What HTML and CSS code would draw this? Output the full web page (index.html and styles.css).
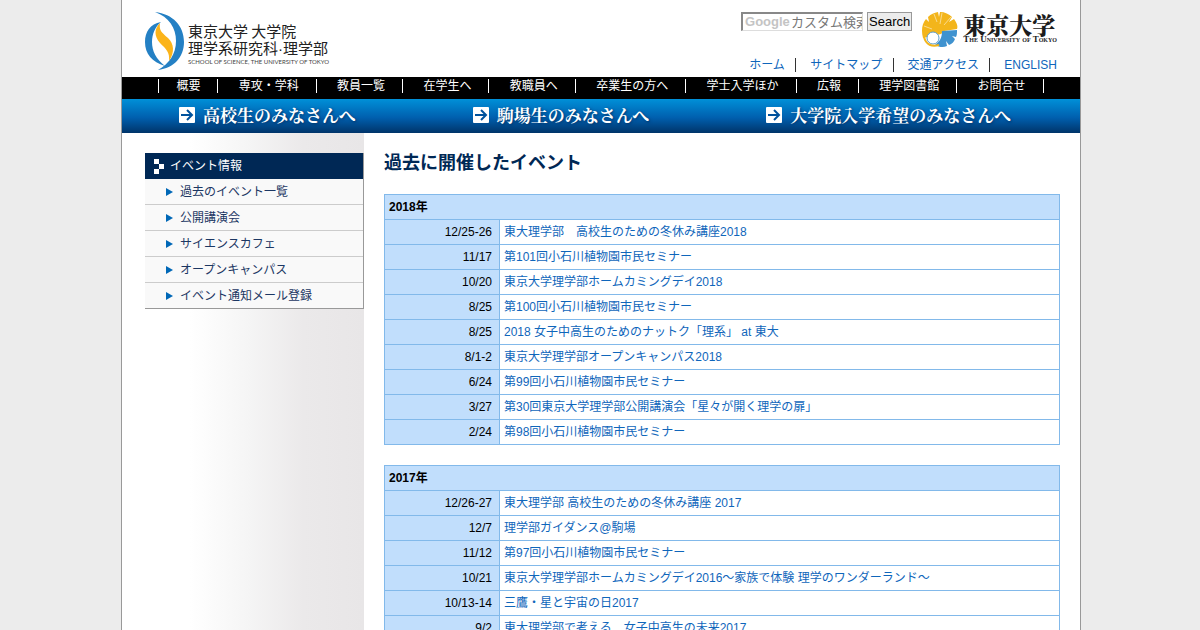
FILE: index.html
```html
<!DOCTYPE html>
<html lang="ja">
<head>
<meta charset="utf-8">
<title>過去に開催したイベント - 東京大学 大学院理学系研究科・理学部</title>
<link rel="stylesheet" href="styles.css">
</head>
<body>
<div class="page">
  <header class="header">
    <a class="brand" href="#">
      <svg class="brand-mark" viewBox="0 0 39 58" aria-hidden="true">
        <path fill="#2480c4" d="M16 10C5 12 0 20 0 30c0 12 7 20 20 24-9-7-13-15-13-24 0-8 3-15 9-20z"/>
        <path fill="#2480c4" d="M10 0c18 2 29 14 29 30 0 15-10 26-26 28 11-6 18-16 18-29C31 16 24 5 10 0z"/>
        <path fill="#fbb41a" d="M15 11c-6 6-6 13 0 20 6 6 10 9 9 18 6-9 5-17-1-23-7-6-9-8-8-15z"/>
      </svg>
      <span class="brand-text">
        <span class="brand-line">東京大学 大学院</span>
        <span class="brand-line">理学系研究科<span class="brand-dot">·</span>理学部</span>
        <span class="brand-en">SCHOOL OF SCIENCE, THE UNIVERSITY OF TOKYO</span>
      </span>
    </a>
    <div class="tools">
      <div class="tools-top">
        <form class="search">
          <label class="search-field">
            <span class="search-logo">Google</span>
            <input class="search-input" type="text" aria-label="カスタム検索" placeholder="カスタム検索">
          </label>
          <button class="search-button" type="button">Search</button>
        </form>
        <a class="univ" href="#">
          <svg class="univ-mark" viewBox="0 0 36 36" aria-hidden="true">
            <path fill="#f3b51b" d="M19 22 1 26C-1 18 0 12 4 7l3 3-1-5c3-3 6-4 10-5l1 5 1-5c5 0 9 2 12 5l-3 5 5-3c3 4 4 7 3 10l-13 2z"/>
            <path fill="#3f92cf" d="m20 19 15-1c0 3 0 5-1 7l-4-1 3 3c-1 3-3 5-6 6l-3-4 1 5c-4 2-8 1-12-1 5-4 7-7 7-14z"/>
            <circle cx="11" cy="26" r="6" fill="#fff" stroke="#5d9dcd"/>
            <path fill="none" stroke="#f3b51b" stroke-width="2" d="M2 25c2 8 8 10 15 8"/>
            <path stroke="#fff" stroke-width=".5" d="m15 10-3-8m6 10 2-11m2 12 7-8M10 17 2 14"/>
          </svg>
          <span class="univ-text">
            <span class="univ-ja">東京大学</span>
            <span class="univ-en">The University of Tokyo</span>
          </span>
        </a>
      </div>
      <ul class="links">
        <li><a href="#">ホーム</a></li>
        <li><a href="#">サイトマップ</a></li>
        <li><a href="#">交通アクセス</a></li>
        <li><a href="#">ENGLISH</a></li>
      </ul>
    </div>
  </header>

  <nav>
    <ul class="nav">
      <li><a href="#">概要</a></li>
      <li><a href="#">専攻・学科</a></li>
      <li><a href="#">教員一覧</a></li>
      <li><a href="#">在学生へ</a></li>
      <li><a href="#">教職員へ</a></li>
      <li><a href="#">卒業生の方へ</a></li>
      <li><a href="#">学士入学ほか</a></li>
      <li><a href="#">広報</a></li>
      <li><a href="#">理学図書館</a></li>
      <li><a href="#">お問合せ</a></li>
    </ul>
  </nav>

  <div class="audience">
    <a href="#"><svg viewBox="0 0 16 16" aria-hidden="true"><rect width="16" height="16" rx="1" fill="#fff"/><path fill="none" stroke="#00529c" stroke-width="2" d="M2 8h11M8 3l5 5-5 5"/></svg>高校生のみなさんへ</a>
    <a href="#"><svg viewBox="0 0 16 16" aria-hidden="true"><rect width="16" height="16" rx="1" fill="#fff"/><path fill="none" stroke="#00529c" stroke-width="2" d="M2 8h11M8 3l5 5-5 5"/></svg>駒場生のみなさんへ</a>
    <a href="#"><svg viewBox="0 0 16 16" aria-hidden="true"><rect width="16" height="16" rx="1" fill="#fff"/><path fill="none" stroke="#00529c" stroke-width="2" d="M2 8h11M8 3l5 5-5 5"/></svg>大学院入学希望のみなさんへ</a>
  </div>

  <div class="body">
    <aside class="side">
      <div class="menu">
        <a class="menu-title" href="#"><svg viewBox="0 0 10 15" aria-hidden="true"><path fill="#fff" d="M0 0h5v5H0zM5 5h5v5H5zM0 10h5v5H0z"/></svg>イベント情報</a>
        <ul class="menu-list">
          <li><a href="#">過去のイベント一覧</a></li>
          <li><a href="#">公開講演会</a></li>
          <li><a href="#">サイエンスカフェ</a></li>
          <li><a href="#">オープンキャンパス</a></li>
          <li><a href="#">イベント通知メール登録</a></li>
        </ul>
      </div>
    </aside>
    <main class="main">
      <h1>過去に開催したイベント</h1>
      <table class="events">
        <thead><tr><th colspan="2">2018年</th></tr></thead>
        <tbody>
          <tr><td class="date">12/25-26</td><td><a href="#">東大理学部　高校生のための冬休み講座2018</a></td></tr>
          <tr><td class="date">11/17</td><td><a href="#">第101回小石川植物園市民セミナー</a></td></tr>
          <tr><td class="date">10/20</td><td><a href="#">東京大学理学部ホームカミングデイ2018</a></td></tr>
          <tr><td class="date">8/25</td><td><a href="#">第100回小石川植物園市民セミナー</a></td></tr>
          <tr><td class="date">8/25</td><td><a href="#">2018 女子中高生のためのナットク「理系」 at 東大</a></td></tr>
          <tr><td class="date">8/1-2</td><td><a href="#">東京大学理学部オープンキャンパス2018</a></td></tr>
          <tr><td class="date">6/24</td><td><a href="#">第99回小石川植物園市民セミナー</a></td></tr>
          <tr><td class="date">3/27</td><td><a href="#">第30回東京大学理学部公開講演会「星々が開く理学の扉」</a></td></tr>
          <tr><td class="date">2/24</td><td><a href="#">第98回小石川植物園市民セミナー</a></td></tr>
        </tbody>
      </table>
      <table class="events">
        <thead><tr><th colspan="2">2017年</th></tr></thead>
        <tbody>
          <tr><td class="date">12/26-27</td><td><a href="#">東大理学部 高校生のための冬休み講座 2017</a></td></tr>
          <tr><td class="date">12/7</td><td><a href="#">理学部ガイダンス@駒場</a></td></tr>
          <tr><td class="date">11/12</td><td><a href="#">第97回小石川植物園市民セミナー</a></td></tr>
          <tr><td class="date">10/21</td><td><a href="#">東京大学理学部ホームカミングデイ2016～家族で体験 理学のワンダーランド～</a></td></tr>
          <tr><td class="date">10/13-14</td><td><a href="#">三鷹・星と宇宙の日2017</a></td></tr>
          <tr><td class="date">9/2</td><td><a href="#">東大理学部で考える　女子中高生の未来2017</a></td></tr>
        </tbody>
      </table>
    </main>
  </div>
</div>
</body>
</html>
```
FILE: styles.css
```css
* { box-sizing: border-box; }
body {
  margin: 0;
  padding-left: 2px;
  background: #ececec;
  color: #000;
  font: 12px/18px "Liberation Sans", "Noto Sans CJK JP", sans-serif;
}
a { color: #0f66bb; text-decoration: none; }
ul { margin: 0; padding: 0; list-style: none; }
svg { display: block; flex: none; }

.page {
  max-width: 960px;
  margin: 0 auto;
  background: #fff;
  border: solid #999;
  border-width: 0 1px;
}

.header {
  display: flex;
  justify-content: space-between;
  padding: 12px 23px 3px;
}
.brand { display: flex; gap: 4px; color: #222; }
.brand-mark { width: 39px; height: 58px; }
.brand-text { display: flex; flex-direction: column; padding-top: 10px; }
.brand-line { font: 15px/17px "Noto Sans CJK JP", sans-serif; white-space: nowrap; }
.brand-dot { font-family: "Liberation Sans", sans-serif; }
.brand-en { font: 6px/9px Lato, sans-serif; color: #444; white-space: nowrap; }

.tools { display: flex; flex-direction: column; align-items: flex-end; gap: 8px; }
.tools-top { display: flex; gap: 10px; }
.search { display: flex; align-items: flex-start; gap: 4px; }
.search-field { position: relative; display: block; }
.search-logo {
  position: absolute;
  left: 4px;
  top: 1px;
  font: bold 13px/18px "Liberation Sans", sans-serif;
  color: #c4c4c4;
}
.search-input {
  display: block;
  width: 122px;
  height: 19px;
  padding: 0 0 0 48px;
  border: solid;
  border-width: 2px 1px 1px 2px;
  border-color: #888 #ddd #ddd #888;
  background: #fff;
  font: 13px/16px "Liberation Sans", "Noto Sans CJK JP", sans-serif;
}
.search-input::placeholder { color: #777; }
.search-button {
  height: 19px;
  padding: 0 1px;
  border: 1px solid #999;
  background: #ececec;
  font: 13px/17px "Liberation Sans", sans-serif;
}
.univ { display: flex; gap: 5px; color: #1c1c1c; }
.univ-mark { width: 36px; height: 36px; }
.univ-text { display: flex; flex-direction: column; padding-top: 3px; }
.univ-ja { font: 900 23px/20px "Noto Serif CJK JP", "Noto Sans CJK JP", serif; }
.univ-en {
  font: bold small-caps 9px/9px "Liberation Serif", serif;
  white-space: nowrap;
}
.links li { display: inline; }
.links li + li { margin-left: 7px; padding-left: 14px; border-left: 1px solid #333; }

.nav {
  background: #000;
  text-align: center;
  height: 22px;
}
.nav li { display: inline; padding: 0 17px; border-right: 1px solid #fff; }
.nav li:first-child { border-left: 1px solid #fff; }
.nav a { color: #fff; }

.audience {
  display: flex;
  gap: 117px;
  padding: 0 57px 2px;
  background: linear-gradient(#0090d8, #005fae 55%, #003469);
}
.audience a {
  display: flex;
  align-items: center;
  gap: 8px;
  font: bold 17px/32px "Noto Serif CJK JP", "Noto Sans CJK JP", serif;
  color: #fff;
  white-space: nowrap;
  text-shadow: 1px 1px 3px #003469;
}
.audience svg { width: 16px; height: 16px; }

.body { display: flex; }
.side {
  flex: 0 0 242px;
  padding: 20px 0 20px 23px;
  background: linear-gradient(90deg, #fff 28%, #f5f5f5 52%, #ebe9ea 75%, #e8e6e7);
}
.menu { border: solid #999; border-width: 0 1px 1px 0; background: #f9f9f9; }
.menu-title {
  display: flex;
  align-items: center;
  gap: 6px;
  padding: 4px 9px;
  background: #002855;
  color: #fff;
}
.menu-title svg { width: 10px; height: 15px; }
.menu-list a {
  display: flex;
  align-items: center;
  gap: 7px;
  padding: 4px 0 3px 21px;
  color: #1c3763;
}
.menu-list a::before {
  content: "";
  border: solid transparent;
  border-width: 4px 0 4px 7px;
  border-left-color: #0068b7;
}
.menu-list li + li { border-top: 1px solid #ccc; }

.main { flex: 1; padding: 20px; }
h1 { margin: 0 0 21px; font-size: 18px; line-height: 20px; color: #002855; }
.events {
  width: 100%;
  margin-bottom: 20px;
  border-collapse: collapse;
}
.events th, .events td { padding: 3px 4px; border: 1px solid #82b9ea; text-align: left; }
.events th, .events .date { background: #c1defc; }
.events .date { width: 115px; padding-right: 7px; text-align: right; }
```
